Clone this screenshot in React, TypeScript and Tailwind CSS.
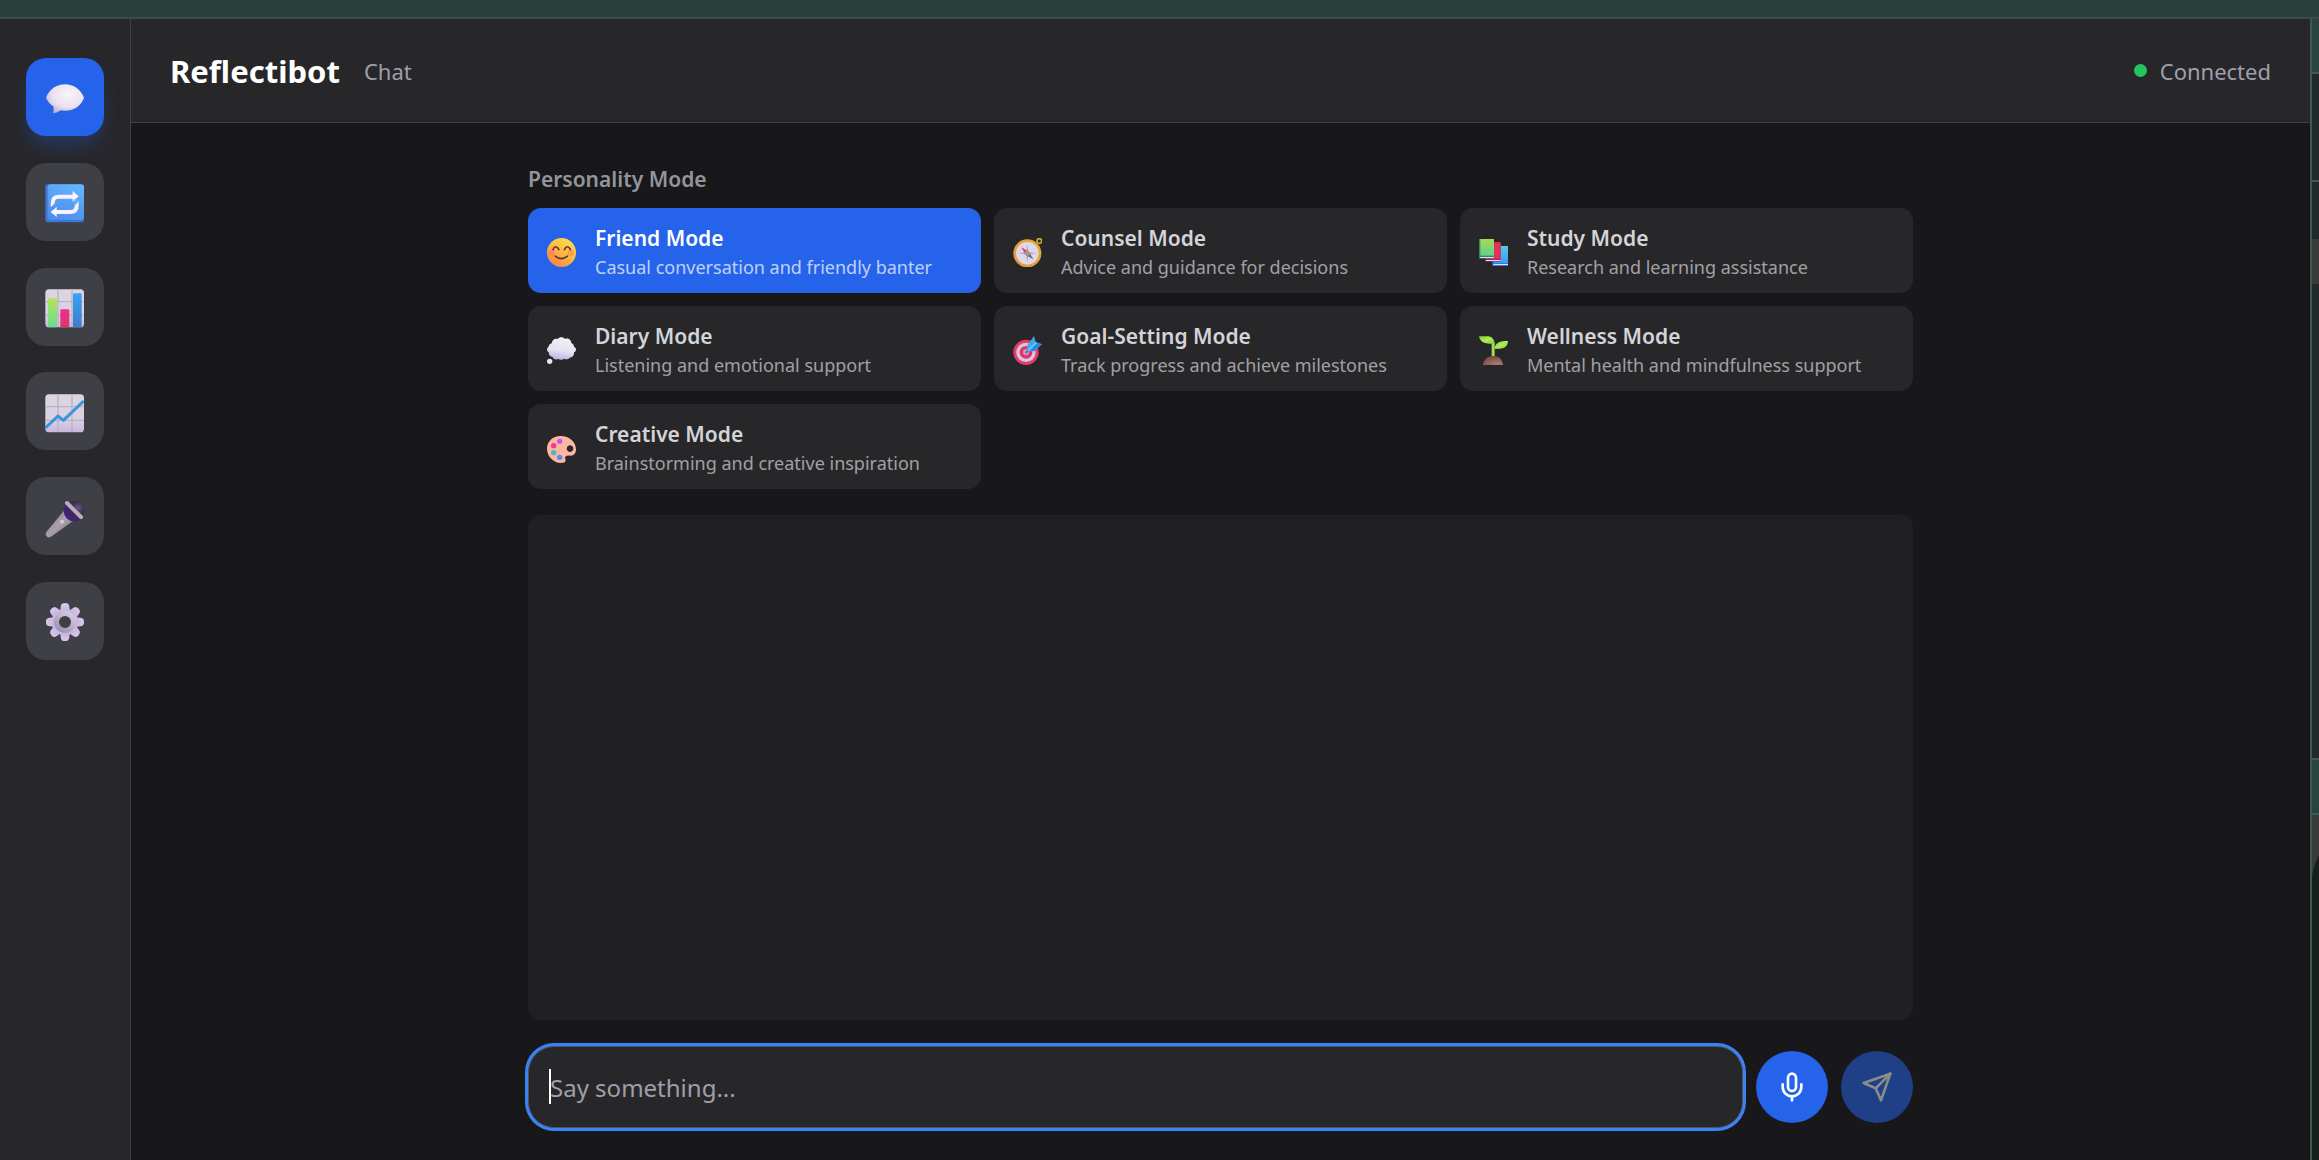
import React from "react";

const BubbleIcon = () => (
  <svg viewBox="0 0 117 117" className="size-[39px]" aria-hidden="true">
    <defs>
      <radialGradient id="bubble" cx="0.6" cy="0.35" r="0.75">
        <stop offset="0" stopColor="#f8f4fa" />
        <stop offset="0.6" stopColor="#e9e0f0" />
        <stop offset="1" stopColor="#b9a4cc" />
      </radialGradient>
    </defs>
    <path d="M3 53C13 28 34 13 60 13s47 15 57 40C108 78 87 92 60 92c-5 0-9-1-13-1-6 4-13 8-20 9-2 0-3-1-2-3 1-4 1-12 0-18C15 73 8 64 3 53Z" fill="url(#bubble)" />
  </svg>
);

const RepeatIcon = () => (
  <svg viewBox="0 0 117 117" className="size-[39px]" aria-hidden="true">
    <defs>
      <linearGradient id="repeat" x1="0.7" y1="0" x2="0.3" y2="1">
        <stop offset="0" stopColor="#62b5fc" />
        <stop offset="0.5" stopColor="#559ff5" />
        <stop offset="1" stopColor="#4d8fee" />
      </linearGradient>
    </defs>
    <rect x="1" y="1" width="116" height="114" rx="9" fill="#3f75d6" />
    <rect x="8" y="1" width="109" height="107" rx="9" fill="url(#repeat)" />
    <g fill="none" stroke="#faf0ff" strokeWidth="12">
      <path d="M23 69V57Q23 38 42 38H86" />
      <path d="M95 51V65Q95 84 76 84H31" />
    </g>
    <path d="M83 21 101 37 83 53ZM35 68 17 84 35 99Z" fill="#faf0ff" />
    <path d="M14 73 30 58V75ZM104 49 88 66V46Z" fill="url(#repeat)" />
  </svg>
);

const ChartPaper = ({ id }: { id: string }) => (
  <>
    <defs>
      <linearGradient id={id} x1="0" y1="0" x2="0" y2="1">
        <stop offset="0" stopColor="#dcd6e0" />
        <stop offset="0.7" stopColor="#d9cfe4" />
        <stop offset="1" stopColor="#c9b6de" />
      </linearGradient>
    </defs>
    <rect x="1" y="1" width="116" height="114" rx="11" fill={`url(#${id})`} />
    <path d="M39 2V114M81 2V114M2 38H116M2 79H116" stroke="#b9b3bf" strokeWidth="4" />
  </>
);

const BarsIcon = () => (
  <svg viewBox="0 0 117 117" className="size-[39px]" aria-hidden="true">
    <defs>
      <linearGradient id="barGreen" x1="0" y1="0" x2="0" y2="1">
        <stop offset="0" stopColor="#b5e35a" />
        <stop offset="1" stopColor="#66dd92" />
      </linearGradient>
      <linearGradient id="barRed" x1="0" y1="0" x2="0" y2="1">
        <stop offset="0" stopColor="#ee2f8c" />
        <stop offset="1" stopColor="#dc3766" />
      </linearGradient>
      <linearGradient id="barBlue" x1="0" y1="0" x2="0" y2="1">
        <stop offset="0" stopColor="#36a6f2" />
        <stop offset="1" stopColor="#3f7ad2" />
      </linearGradient>
    </defs>
    <ChartPaper id="paperBars" />
    <rect x="9" y="28" width="27" height="87" rx="3" fill="url(#barGreen)" />
    <rect x="46" y="61" width="27" height="54" rx="3" fill="url(#barRed)" />
    <rect x="84" y="13" width="26" height="102" rx="3" fill="url(#barBlue)" />
  </svg>
);

const TrendIcon = () => (
  <svg viewBox="0 0 117 117" className="size-[39px]" aria-hidden="true">
    <ChartPaper id="paperTrend" />
    <path d="M1 102 39 66 55 79 116 21" fill="none" stroke="#3695dd" strokeWidth="9" strokeLinejoin="round" />
  </svg>
);

const MicrophoneIcon = () => (
  <svg viewBox="0 0 117 117" className="size-[39px]" aria-hidden="true">
    <defs>
      <radialGradient id="micHead" cx="0.7" cy="0.35" r="0.7">
        <stop offset="0" stopColor="#6a5a78" />
        <stop offset="0.45" stopColor="#3b2a50" />
        <stop offset="1" stopColor="#43207a" />
      </radialGradient>
      <linearGradient id="micBody" x1="0.2" y1="0.2" x2="0.8" y2="0.8">
        <stop offset="0" stopColor="#8f878f" />
        <stop offset="0.5" stopColor="#aaa0aa" />
        <stop offset="1" stopColor="#8d8391" />
      </linearGradient>
    </defs>
    <path d="M56 36 4 99Q-1 107 6 113 12 118 20 112L84 66Z" fill="url(#micBody)" />
    <circle cx="87" cy="36" r="31" fill="url(#micHead)" />
    <path d="M66 12 108 54" stroke="#b8adb9" strokeWidth="12" strokeLinecap="round" />
    <circle cx="51" cy="68" r="6" fill="#d4ccd6" />
  </svg>
);

const TEETH = [0, 45, 90, 135, 180, 225, 270, 315];

const GearIcon = () => (
  <svg viewBox="0 0 117 117" className="size-[39px]" aria-hidden="true">
    <defs>
      <linearGradient id="gearFace" x1="0.6" y1="0" x2="0.4" y2="1">
        <stop offset="0" stopColor="#d8caea" />
        <stop offset="1" stopColor="#c4b0e2" />
      </linearGradient>
      <linearGradient id="gearRing" x1="0.8" y1="0.1" x2="0.2" y2="0.9">
        <stop offset="0" stopColor="#d4cbdc" />
        <stop offset="1" stopColor="#9f92ac" />
      </linearGradient>
    </defs>
    {TEETH.map((angle) => (
      <path key={angle} d="M44 30 48 7Q50 0 60 0T72 7L76 30Z" fill="url(#gearFace)" transform={`rotate(${angle} 60 57)`} />
    ))}
    <circle cx="60" cy="57" r="39" fill="#c9b8e4" />
    <circle cx="60" cy="57" r="33" fill="url(#gearRing)" />
    <circle cx="60" cy="57" r="18" fill="#3f3f46" />
  </svg>
);

const SmileIcon = () => (
  <svg viewBox="0 0 88 88" className="size-[29px]" aria-hidden="true">
    <defs>
      <linearGradient id="smile" x1="0.8" y1="0.1" x2="0.2" y2="1">
        <stop offset="0" stopColor="#ffd84f" />
        <stop offset="0.55" stopColor="#ffb03f" />
        <stop offset="1" stopColor="#fb7a4d" />
      </linearGradient>
    </defs>
    <circle cx="44" cy="44" r="44" fill="url(#smile)" />
    <circle cx="14" cy="46" r="10" fill="#fb7a5a" opacity="0.6" />
    <circle cx="73" cy="46" r="10" fill="#fb8a4a" opacity="0.6" />
    <path d="M18 35Q26 18 36 35M53 35Q61 18 71 35M25 55Q43 70 62 55" fill="none" stroke="#583440" strokeWidth="5" strokeLinecap="round" />
  </svg>
);

const ThoughtIcon = () => (
  <svg viewBox="0 0 87 87" className="size-[29px]" aria-hidden="true">
    <defs>
      <linearGradient id="thought" x1="0.6" y1="0" x2="0.4" y2="1">
        <stop offset="0" stopColor="#f3f0f8" />
        <stop offset="0.6" stopColor="#e6e1f2" />
        <stop offset="1" stopColor="#bdb2dc" />
      </linearGradient>
    </defs>
    <path d="M14 22C15 12 24 6 32 9 37 2 49 2 54 9 63 5 73 12 73 21 79 24 81 29 81 32 89 36 89 46 81 49 82 57 77 65 68 65 63 72 54 70 50 68 45 73 37 72 34 69 26 72 18 69 17 63 8 61 4 54 6 49-2 45-2 36 5 32 5 27 9 23 14 22Z" fill="url(#thought)" />
    <circle cx="8" cy="76" r="8" fill="#e9e5f5" />
  </svg>
);

const PaletteIcon = () => (
  <svg viewBox="0 0 87 87" className="size-[29px]" aria-hidden="true">
    <path fillRule="evenodd" d="M40 6C68 6 87 25 87 46 87 59 79 66 69 65 58 63 52 67 55 76 58 84 52 87 42 87 18 86 0 66 0 44 0 22 18 6 40 6ZM69 34a10 10 0 1 0 .1 0Z" fill="#fdb5a4" />
    <circle cx="38" cy="22" r="8" fill="#bd5cf2" />
    <circle cx="20" cy="35" r="8" fill="#f23a86" />
    <circle cx="20" cy="56" r="8" fill="#46bcb8" />
    <circle cx="38" cy="70" r="8" fill="#4a90f5" />
  </svg>
);

const CompassIcon = () => (
  <svg viewBox="0 0 87 87" className="size-[29px]" aria-hidden="true">
    <defs>
      <linearGradient id="gold" x1="1" y1="0" x2="0" y2="1">
        <stop offset="0" stopColor="#e0ae35" />
        <stop offset="1" stopColor="#e9963f" />
      </linearGradient>
    </defs>
    <circle cx="79" cy="9" r="7" fill="none" stroke="#d9a336" strokeWidth="5" />
    <circle cx="43" cy="46" r="38" fill="#dfd7e8" stroke="url(#gold)" strokeWidth="8" />
    <path d="M43 20 46 43 69 46 46 49 43 72 40 49 17 46 40 43Z" fill="#a59cab" />
    <path d="M25 28 48 41 38 51Z" fill="#e33a66" />
    <path d="M61 64 38 51 48 41Z" fill="#6b6270" />
    <circle cx="43" cy="46" r="8" fill="#a8969f" />
  </svg>
);

const TargetIcon = () => (
  <svg viewBox="0 0 87 87" className="size-[29px]" aria-hidden="true">
    <circle cx="39" cy="49" r="38" fill="#e63c68" />
    <circle cx="39" cy="49" r="29" fill="#d8c6e2" />
    <circle cx="39" cy="49" r="19" fill="#e0336c" />
    <circle cx="39" cy="49" r="9" fill="#c4a4c4" />
    <path d="M38 51 56 34" stroke="#4c7f9c" strokeWidth="6" />
    <path d="M41 31 63 0 68 18 87 25 63 46 45 46Z" fill="#3fa7ee" />
    <path d="M48 42 68 18 87 25 63 46Z" fill="#2f86e4" />
    <path d="M46 44 70 19" stroke="#6cc9fa" strokeWidth="5" />
  </svg>
);

const BooksIcon = () => (
  <svg viewBox="0 0 87 87" className="size-[29px]" aria-hidden="true">
    <defs>
      <linearGradient id="bookGreen" x1="0" y1="0" x2="0" y2="1">
        <stop offset="0" stopColor="#a2dc52" />
        <stop offset="1" stopColor="#63cf8d" />
      </linearGradient>
      <linearGradient id="bookBlue" x1="0" y1="0" x2="0" y2="1">
        <stop offset="0" stopColor="#4fcbf0" />
        <stop offset="1" stopColor="#3a9ff0" />
      </linearGradient>
    </defs>
    <rect x="40" y="24" width="47" height="60" fill="#3777d8" />
    <rect x="44" y="24" width="43" height="51" fill="url(#bookBlue)" />
    <rect x="43" y="78" width="44" height="3" fill="#e5dcf2" />
    <rect x="18" y="13" width="47" height="58" fill="#a52863" />
    <rect x="23" y="13" width="42" height="49" fill="#e4305b" />
    <rect x="21" y="66" width="44" height="3" fill="#e5dcf2" />
    <rect x="0" y="3" width="45" height="59" fill="#35856a" />
    <rect x="4" y="3" width="41" height="50" fill="url(#bookGreen)" />
    <rect x="3" y="57" width="42" height="3" fill="#e5dcf2" />
  </svg>
);

const SproutIcon = () => (
  <svg viewBox="0 0 87 87" className="size-[29px]" aria-hidden="true">
    <defs>
      <linearGradient id="leaf" x1="0" y1="0" x2="1" y2="1">
        <stop offset="0" stopColor="#7fc92f" />
        <stop offset="0.5" stopColor="#b2ec55" />
        <stop offset="1" stopColor="#85c93c" />
      </linearGradient>
      <radialGradient id="soil" cx="0.7" cy="0.9" r="0.8">
        <stop offset="0" stopColor="#b07a74" />
        <stop offset="1" stopColor="#7c4f4a" />
      </radialGradient>
    </defs>
    <path d="M38 20H47V60H38Z" fill="#a0dc54" />
    <path d="M0 1H24C38 1 46 9 47 23H32C13 23 2 15 0 1Z" fill="url(#leaf)" />
    <path d="M87 15C70 14 48 17 47 38H60C77 38 86 31 87 15Z" fill="url(#leaf)" />
    <path d="M12 87C13 70 27 60 43 60S71 70 72 87Z" fill="url(#soil)" />
  </svg>
);

const VIEWS = [
  { label: "Chat", Icon: BubbleIcon },
  { label: "Sessions", Icon: RepeatIcon },
  { label: "Statistics", Icon: BarsIcon },
  { label: "Trends", Icon: TrendIcon },
  { label: "Voice", Icon: MicrophoneIcon },
  { label: "Settings", Icon: GearIcon },
];

const MODES = [
  { name: "Friend Mode", about: "Casual conversation and friendly banter", Icon: SmileIcon },
  { name: "Counsel Mode", about: "Advice and guidance for decisions", Icon: CompassIcon },
  { name: "Study Mode", about: "Research and learning assistance", Icon: BooksIcon },
  { name: "Diary Mode", about: "Listening and emotional support", Icon: ThoughtIcon },
  { name: "Goal-Setting Mode", about: "Track progress and achieve milestones", Icon: TargetIcon },
  { name: "Wellness Mode", about: "Mental health and mindfulness support", Icon: SproutIcon },
  { name: "Creative Mode", about: "Brainstorming and creative inspiration", Icon: PaletteIcon },
];

function Sidebar() {
  return (
    <nav className="shrink-0 border-r border-zinc-700 bg-[#27272a] px-[26px] pt-[39px]">
      <div className="flex h-[602px] flex-col justify-between">
        {VIEWS.map(({ label, Icon }, i) => (
          <button
            key={label}
            type="button"
            aria-label={label}
            className={
              i === 0
                ? "flex size-[78px] items-center justify-center rounded-[20px] bg-[#2563eb] pt-1 pr-px shadow-[0_13px_20px_-4px_rgba(37,99,235,0.3)]"
                : "flex size-[78px] items-center justify-center rounded-[20px] bg-[#3f3f46] pt-1 pr-px"
            }
          >
            <Icon />
          </button>
        ))}
      </div>
    </nav>
  );
}

function Header() {
  return (
    <header className="flex h-[104px] shrink-0 items-center justify-between border-b border-zinc-700 bg-[#27272a] px-[39px]">
      <div className="flex items-center gap-6">
        <h1 className="text-[31px] leading-[42px] font-bold text-white">Reflectibot</h1>
        <span className="text-[22px] leading-7 text-zinc-400">Chat</span>
      </div>
      <div className="flex items-center gap-[13px]">
        <span className="size-[13px] rounded-full bg-[#22c55e]" />
        <span className="text-[22px] leading-7 text-zinc-400">Connected</span>
      </div>
    </header>
  );
}

function ModePicker() {
  return (
    <section aria-labelledby="modes">
      <h2 id="modes" className="mb-[11px] text-[21px] leading-[35px] font-semibold text-[#94949b]">
        Personality Mode
      </h2>
      <div className="grid grid-cols-3 gap-[13px]">
        {MODES.map(({ name, about, Icon }, i) => (
          <button
            key={name}
            type="button"
            aria-pressed={i === 0}
            className={
              i === 0
                ? "flex h-[85px] items-center gap-[19px] rounded-[13px] bg-[#2563eb] px-[19px] text-left text-white"
                : "flex h-[85px] items-center gap-[19px] rounded-[13px] bg-[#27272a] px-[19px] text-left text-zinc-300"
            }
          >
            <span className="shrink-0 pt-1">
              <Icon />
            </span>
            <span className="min-w-0 pt-0.5">
              <span className="block text-[21px] leading-[31px] font-semibold">{name}</span>
              <span className="block text-[18px] leading-[26px] opacity-70">{about}</span>
            </span>
          </button>
        ))}
      </div>
    </section>
  );
}

function Composer() {
  return (
    <form className="flex items-center gap-[13px]" onSubmit={(e) => e.preventDefault()}>
      <div className="relative flex-1">
        <input
          type="text"
          aria-label="Message"
          placeholder="Say something..."
          className="block h-[82px] w-full rounded-[26px] border border-zinc-600 bg-[#27272a] px-[21px] text-[24px] text-white ring-[3px] ring-[#3b82f6] outline-none placeholder:text-zinc-400"
        />
        <span className="absolute top-[23px] left-[21px] h-[35px] w-0.5 bg-white" />
      </div>
      <button type="button" aria-label="Record" className="flex size-[72px] items-center justify-center rounded-full bg-[#2563eb] text-white">
        <svg viewBox="0 0 24 24" className="size-[32px]" fill="none" stroke="currentColor" strokeWidth="2" strokeLinecap="round" strokeLinejoin="round" aria-hidden="true">
          <path d="M12 19v3" />
          <path d="M19 10v2a7 7 0 0 1-14 0v-2" />
          <rect x="9" y="2" width="6" height="13" rx="3" />
        </svg>
      </button>
      <button type="submit" aria-label="Send" className="flex size-[72px] items-center justify-center rounded-full bg-[#1f3f86] text-[#8c8c8c]">
        <svg viewBox="0 0 24 24" className="size-[32px]" fill="none" stroke="currentColor" strokeWidth="2" strokeLinecap="round" strokeLinejoin="round" aria-hidden="true">
          <path d="m22 2-7 20-4-9-9-4Z" />
          <path d="M22 2 11 13" />
        </svg>
      </button>
    </form>
  );
}

function BackgroundWindow() {
  return (
    <div className="flex w-[9px] shrink-0 flex-col overflow-hidden border-l-2 border-[#40584f] bg-[#22292a]">
      <div className="h-[55px] border-b-2 border-[#40584f] bg-[#29433e]" />
      <div className="h-[108px] border-b-2 border-[#40584f]" />
      <div className="mt-[57px] h-[45px] bg-[#383b3a]" />
      <div className="mt-[474px] h-[57px] border-y-2 border-[#40584f] bg-[#29433e]" />
      <div className="flex flex-1 flex-col bg-[#383b3a] pt-[16px]">
        <div className="w-[60px] flex-1 rounded-tl-[50px] bg-[#15201d]" />
      </div>
    </div>
  );
}

export default function App() {
  return (
    <div className="flex min-h-screen flex-col bg-[#18181b] font-['Noto_Sans','Open_Sans',sans-serif]">
      <div className="h-[19px] shrink-0 border-b-2 border-[#3f4845] bg-[#29413d]" />
      <div className="flex flex-1">
        <Sidebar />
        <div className="flex min-w-0 flex-1 flex-col">
          <Header />
          <main className="mx-auto flex w-full max-w-[1385px] flex-1 flex-col gap-[26px] pt-[39px] pb-8">
            <ModePicker />
            <section aria-label="Conversation" className="flex-1 rounded-[13px] bg-[#202022]" />
            <Composer />
          </main>
        </div>
        <BackgroundWindow />
      </div>
    </div>
  );
}
